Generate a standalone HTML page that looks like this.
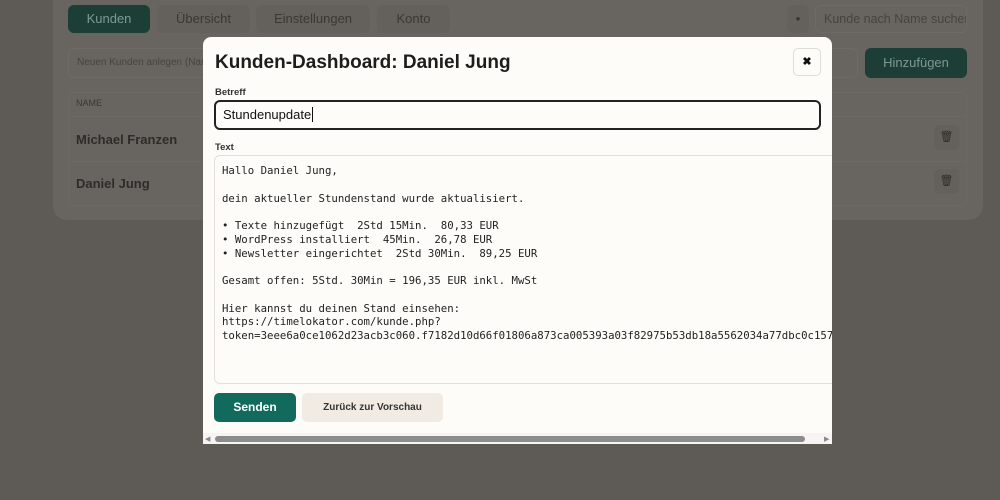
<!DOCTYPE html>
<html><head><meta charset="utf-8"><style>
*{box-sizing:border-box;margin:0;padding:0}
body{width:1000px;height:500px;overflow:hidden;background:#5e5a56;font-family:"Liberation Sans",sans-serif;position:relative}
.card{position:absolute;left:53px;top:-20px;width:930px;height:240px;background:#686460;border-radius:14px}
.tab{position:absolute;top:5px;height:28px;border-radius:6px;background:#64605c;color:#3a3835;font-size:13px;text-align:center;line-height:28px}
.abs{position:absolute;white-space:nowrap}
.modal{position:absolute;left:203px;top:37px;width:629px;height:407px;background:#fdfcf8;border-radius:8px 8px 0 0;overflow:hidden}
.mono{font-family:"DejaVu Sans Mono","Liberation Mono",monospace;font-size:10.7px;line-height:13.75px;color:#222;white-space:pre}
</style></head><body>
<div class="card"></div>
<div class="tab" style="left:68px;width:82px;background:#1d3d37;color:#7d9992">Kunden</div>
<div class="tab" style="left:157px;width:93px">Übersicht</div>
<div class="tab" style="left:256px;width:114px">Einstellungen</div>
<div class="tab" style="left:377px;width:73px">Konto</div>
<div class="abs" style="left:787px;top:5px;width:22px;height:28px;border-radius:6px;background:#64605c;color:#333;font-size:8px;text-align:center;line-height:28px">●</div>
<div class="abs" style="left:815px;top:5px;width:152px;height:28px;border-radius:6px;border:1px solid #6e6a66;color:#47443f;font-size:12.5px;line-height:26px;padding-left:8px;overflow:hidden">Kunde nach Name suchen</div>
<div class="abs" style="left:68px;top:48px;width:150px;height:30px;border-radius:6px;border:1px solid #6e6a66;color:#47443f;font-size:10px;line-height:28px;padding-left:8px;overflow:hidden">Neuen Kunden anlegen (Name</div>
<div class="abs" style="left:820px;top:48px;width:38px;height:30px;border-radius:6px;border:1px solid #6e6a66"></div>
<div class="abs" style="left:865px;top:48px;width:102px;height:30px;border-radius:6px;background:#1d3d37;color:#7d9992;font-size:13px;text-align:center;line-height:30px">Hinzufügen</div>
<div class="abs" style="left:68px;top:92px;width:899px;height:114px;border:1px solid #6c6864;border-radius:6px"></div>
<div class="abs" style="left:68px;top:116px;width:899px;border-top:1px solid #6c6864"></div>
<div class="abs" style="left:68px;top:161px;width:899px;border-top:1px solid #6c6864"></div>
<div class="abs" style="left:76px;top:98px;font-size:9px;color:#3a3835">NAME</div>
<div class="abs" style="left:76px;top:132px;font-size:13px;font-weight:bold;color:#2e2c2a">Michael Franzen</div>
<div class="abs" style="left:76px;top:176px;font-size:13px;font-weight:bold;color:#2e2c2a">Daniel Jung</div>
<div class="abs" style="left:934px;top:125px;width:25px;height:25px;border-radius:5px;background:#64605c;color:#2e2c2a;font-size:11px;text-align:center;line-height:25px">🗑</div>
<div class="abs" style="left:934px;top:169px;width:25px;height:25px;border-radius:5px;background:#64605c;color:#2e2c2a;font-size:11px;text-align:center;line-height:25px">🗑</div>

<div class="modal">
 <div class="abs" style="left:12px;top:15px;font-size:19px;font-weight:bold;color:#1e1d1b">Kunden-Dashboard: Daniel Jung</div>
 <div class="abs" style="left:590px;top:11px;width:28px;height:28px;border:1px solid #e0ddd6;border-radius:5px;text-align:center;line-height:27px;font-size:11px;font-weight:bold;color:#111">✖</div>
 <div class="abs" style="left:12px;top:50px;font-size:9.5px;font-weight:bold;color:#333">Betreff</div>
 <div class="abs" style="left:11px;top:63px;width:607px;height:30px;border:2px solid #222;border-radius:6px;font-size:13px;line-height:26px;padding-left:7px;color:#111">Stundenupdate<span style="border-left:1px solid #111;margin-left:1px"></span></div>
 <div class="abs" style="left:12px;top:105px;font-size:9.5px;font-weight:bold;color:#333">Text</div>
 <div class="abs" style="left:11px;top:118px;width:700px;height:229px;border:1px solid #e3e0d9;border-radius:6px;overflow:hidden;padding:8px 0 0 7px"><div class="mono">Hallo Daniel Jung,

dein aktueller Stundenstand wurde aktualisiert.

• Texte hinzugefügt  2Std 15Min.  80,33 EUR
• WordPress installiert  45Min.  26,78 EUR
• Newsletter eingerichtet  2Std 30Min.  89,25 EUR

Gesamt offen: 5Std. 30Min = 196,35 EUR inkl. MwSt

Hier kannst du deinen Stand einsehen:
https://timelokator.com/kunde.php?
token=3eee6a0ce1062d23acb3c060.f7182d10d66f01806a873ca005393a03f82975b53db18a5562034a77dbc0c157</div></div>
 <div class="abs" style="left:11px;top:356px;width:82px;height:29px;border-radius:5px;background:#126a5d;color:#fff;font-size:12px;text-align:center;line-height:29px;font-weight:bold">Senden</div>
 <div class="abs" style="left:99px;top:356px;width:141px;height:29px;border-radius:5px;background:#f1ebe4;color:#333;font-size:10px;text-align:center;line-height:29px;font-weight:bold">Zurück zur Vorschau</div>
 <div class="abs" style="left:0;top:396px;width:629px;height:11px;background:#f6f5f3"></div>
 <div class="abs" style="left:2px;top:398px;color:#888;font-size:7px">◀</div>
 <div class="abs" style="left:621px;top:398px;color:#888;font-size:7px">▶</div>
 <div class="abs" style="left:12px;top:399px;width:590px;height:6px;border-radius:3px;background:#8c8c8c"></div>
</div>
</body></html>
